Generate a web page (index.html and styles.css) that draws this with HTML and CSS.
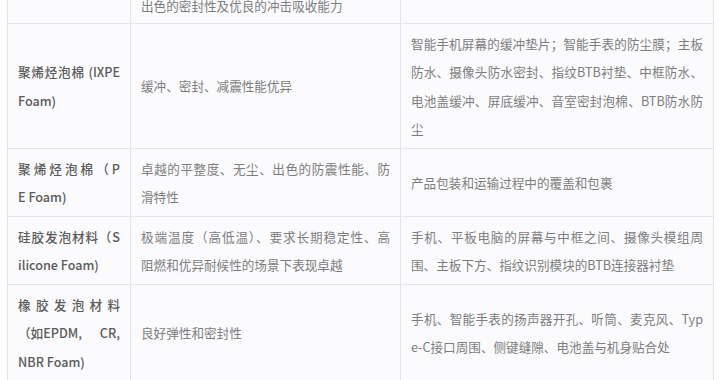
FILE: index.html
```html
<!DOCTYPE html>
<html lang="zh-CN">
<head>
<meta charset="utf-8">
<title>泡棉材料</title>
<link rel="stylesheet" href="styles.css">
</head>
<body>
<div class="wrap">
<table class="foam">
<colgroup><col class="c1"><col class="c2"><col class="c3"></colgroup>
<tbody>
<tr class="first">
<td class="name"></td>
<td>出色的密封性及优良的冲击吸收能力</td>
<td></td>
</tr>
<tr>
<td class="name"><span class="ln">聚烯烃泡棉 (IXPE</span>Foam)</td>
<td>缓冲、密封、减震性能优异</td>
<td><span class="ln">智能手机屏幕的缓冲垫片；智能手表的防尘膜；主板</span><span class="ln">防水、摄像头防水密封、指纹BTB衬垫、中框防水、</span><span class="ln">电池盖缓冲、屏底缓冲、音室密封泡棉、BTB防水防</span>尘</td>
</tr>
<tr>
<td class="name"><span class="ln">聚烯烃泡棉（P</span>E Foam)</td>
<td><span class="ln">卓越的平整度、无尘、出色的防震性能、防</span>滑特性</td>
<td>产品包装和运输过程中的覆盖和包裹</td>
</tr>
<tr>
<td class="name"><span class="ln">硅胶发泡材料（S</span>ilicone Foam)</td>
<td><span class="ln">极端温度（高低温）、要求长期稳定性、高</span>阻燃和优异耐候性的场景下表现卓越</td>
<td><span class="ln">手机、平板电脑的屏幕与中框之间、摄像头模组周</span>围、主板下方、指纹识别模块的BTB连接器衬垫</td>
</tr>
<tr>
<td class="name"><span class="ln"><span class="tight">橡胶发泡材料</span></span><span class="ln"><span class="atom">（如EPDM,</span> CR,</span>NBR Foam)</td>
<td>良好弹性和密封性</td>
<td><span class="ln">手机、智能手表的扬声器开孔、听筒、麦克风、Typ</span>e-C接口周围、侧键缝隙、电池盖与机身贴合处</td>
</tr>
</tbody>
</table>
</div>
</body>
</html>
```
FILE: styles.css
```css
html, body {
  margin: 0;
  background: #ffffff;
}

body {
  font-family: "Noto Sans CJK SC", "Noto Sans", sans-serif;
}

.wrap {
  padding: 0 7px;
  margin-top: -15px;
}

.foam {
  width: 706px;
  border-collapse: collapse;
  table-layout: fixed;
  background: #fbfbfd;
}

.c1 { width: 123px; }
.c2 { width: 270px; }
.c3 { width: 313px; }

.foam td {
  border: 1px solid #e4e5ea;
  padding: 6px 10px 4px;
  font-size: 12.6px;
  line-height: 28.5px;
  color: #7d7d7d;
  text-align: justify;
  word-break: break-all;
  vertical-align: middle;
}

.foam tr.first td {
  padding-bottom: 2px;
}

.foam td.name {
  color: #5a5a5a;
  font-weight: 500;
}

.ln {
  display: block;
  text-align-last: justify;
}

.atom {
  display: inline-block;
}
```
